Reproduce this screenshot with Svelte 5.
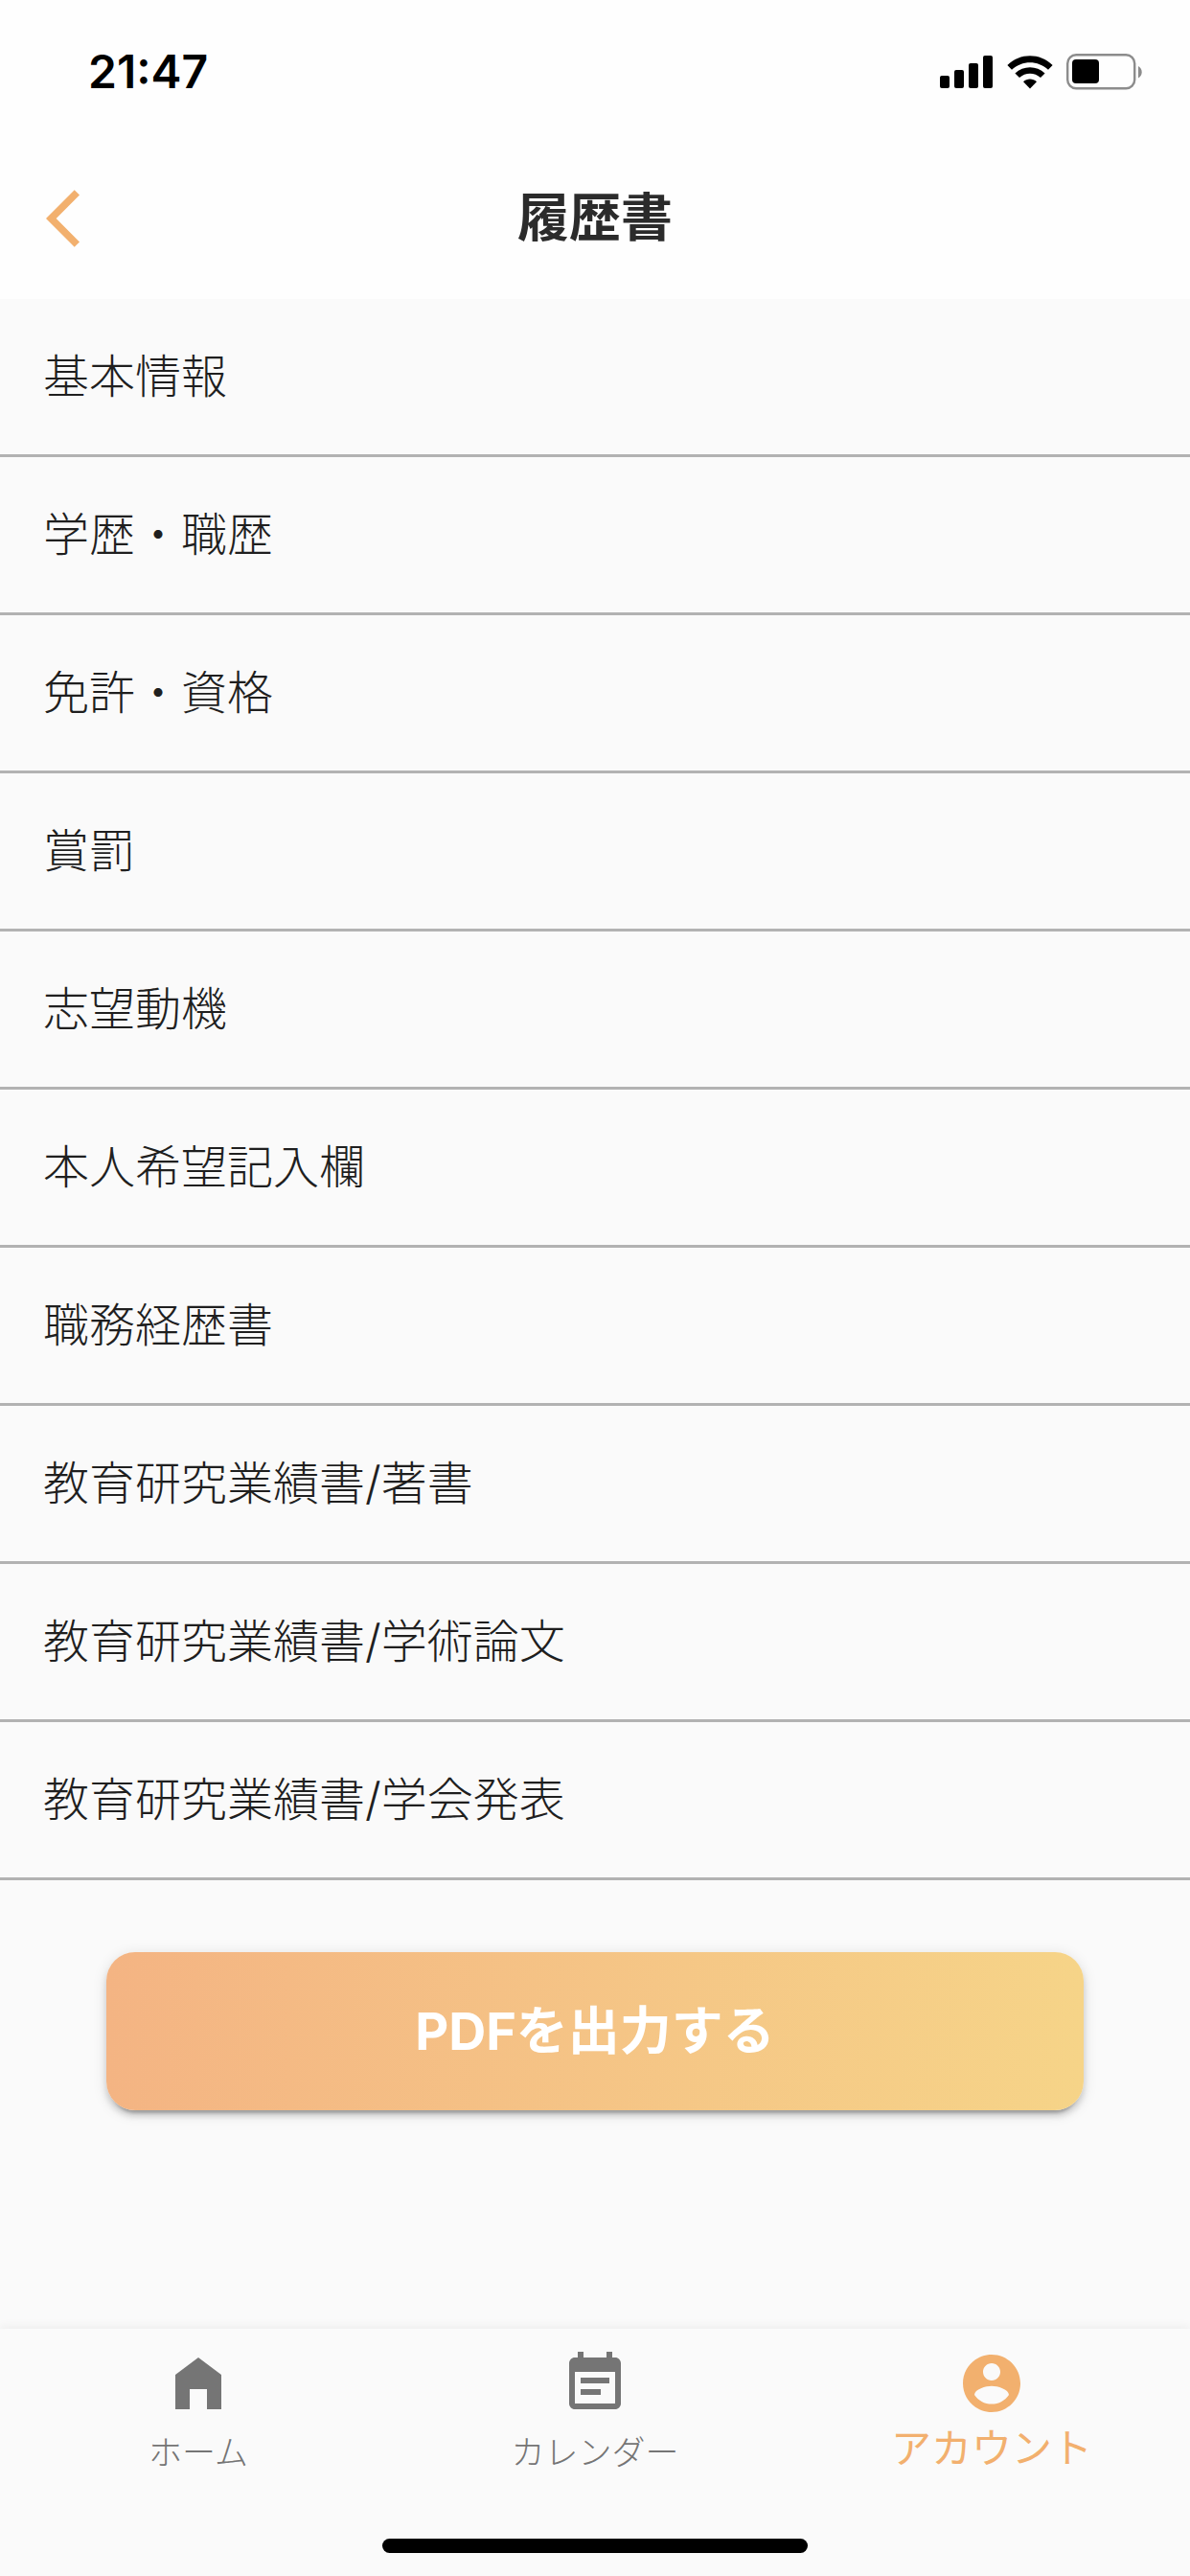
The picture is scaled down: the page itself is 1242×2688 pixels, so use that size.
<script lang="ts">
	let sections = [
		'基本情報',
		'学歴・職歴',
		'免許・資格',
		'賞罰',
		'志望動機',
		'本人希望記入欄',
		'職務経歴書',
		'教育研究業績書/著書',
		'教育研究業績書/学術論文',
		'教育研究業績書/学会発表'
	];

	let tabs = [
		{ label: 'ホーム', icon: 'M12 3L4 9v12h5v-7h6v7h5V9l-8-6z' },
		{
			label: 'カレンダー',
			icon: 'M17 10H7v2h10v-2zm2-7h-1V1h-2v2H8V1H6v2H5c-1.11 0-1.99.9-1.99 2L3 19c0 1.1.89 2 2 2h14c1.1 0 2-.9 2-2V5c0-1.1-.9-2-2-2zm0 16H5V8h14v11zm-5-5H7v2h7v-2z'
		},
		{
			label: 'アカウント',
			icon: 'M12 2C6.48 2 2 6.48 2 12s4.48 10 10 10 10-4.48 10-10S17.52 2 12 2zm0 3c1.66 0 3 1.34 3 3s-1.34 3-3 3-3-1.34-3-3 1.34-3 3-3zm0 14.2c-2.5 0-4.71-1.28-6-3.22.03-1.99 4-3.08 6-3.08 1.99 0 5.97 1.09 6 3.08-1.29 1.94-3.5 3.22-6 3.22z'
		}
	];

	let activeTab = $state(2);
</script>

<div class="screen">
	<header>
		<div class="status">
			<span class="time">21:47</span>
			<div class="indicators">
				<svg width="56" height="36" viewBox="0 0 56 36">
					<rect x="0" y="22" width="10" height="13" rx="2" />
					<rect x="15" y="16" width="10" height="19" rx="2" />
					<rect x="30" y="9" width="10" height="26" rx="2" />
					<rect x="45" y="1" width="10" height="34" rx="2" />
				</svg>
				<svg width="48" height="36" viewBox="0 0 48 36">
					<path d="M24 35.5l-7-7.2c4-3.6 10-3.6 14 0z" />
					<path d="M8.4 19.4l4.6 4.7c6.2-5.8 15.8-5.8 22 0l4.6-4.7c-8.8-8.2-22.4-8.2-31.2 0z" />
					<path d="M.4 11l4.6 4.7c10.7-10.1 27.3-10.1 38 0l4.6-4.7c-13.2-13-34-13-47.2 0z" />
				</svg>
				<svg width="80" height="38" viewBox="0 0 80 38">
					<rect class="shell" x="1.2" y="1.2" width="70" height="35" rx="9" />
					<rect x="6" y="6" width="28" height="25" rx="4" />
					<path class="nub" d="M75 13c5 2.5 5 10 0 12.5z" />
				</svg>
			</div>
		</div>
		<div class="appbar">
			<button class="back" aria-label="戻る">
				<svg width="72" height="72" viewBox="0 0 24 24">
					<path d="M11.67 3.87L9.9 2.1 0 12l9.9 9.9 1.77-1.77L3.54 12z" />
				</svg>
			</button>
			<h1>履歴書</h1>
		</div>
	</header>

	<main>
		<ul>
			{#each sections as section}
				<li><a href="#top">{section}</a></li>
			{/each}
		</ul>
		<div class="action">
			<button class="export">PDFを出力する</button>
		</div>
	</main>

	<footer>
		<nav>
			{#each tabs as tab, i}
				<button class="tab" class:active={i === activeTab} onclick={() => (activeTab = i)}>
					<svg width="72" height="72" viewBox="0 0 24 24"><path d={tab.icon} /></svg>
					<span>{tab.label}</span>
				</button>
			{/each}
		</nav>
		<div class="home-bar"></div>
	</footer>
</div>

<style>
	:global(body) {
		margin: 0;
		background-color: #fafafa;
	}

	.screen {
		min-height: 100vh;
		display: flex;
		flex-direction: column;
		background-color: #fafafa;
		font-family: Inter, 'Noto Sans CJK JP', sans-serif;
	}

	button {
		border: none;
		padding: 0;
		background: none;
		font-family: inherit;
		cursor: pointer;
	}

	svg {
		display: block;
	}

	header {
		background-color: #fefefe;
	}

	.status {
		display: flex;
		justify-content: space-between;
		align-items: center;
		height: 144px;
		padding: 5px 49px 0 92px;
		box-sizing: border-box;
	}

	.time {
		font-size: 48px;
		font-weight: 600;
		line-height: 48px;
		color: #000;
	}

	.indicators {
		display: flex;
		align-items: center;
		gap: 14px;
	}

	.shell {
		fill: none;
		stroke: #8c8c8c;
		stroke-width: 2.4;
	}

	.nub {
		fill: #8c8c8c;
	}

	.appbar {
		display: grid;
		grid-template-columns: 72px 1fr 72px;
		align-items: center;
		height: 168px;
		padding: 0 48px;
	}

	.back {
		fill: #f2b06e;
	}

	h1 {
		margin: 0;
		text-align: center;
		font-size: 54px;
		font-weight: 700;
		line-height: 72px;
		color: #2b2b2b;
	}

	main {
		flex: 1;
	}

	ul {
		margin: 0;
		padding: 0;
		list-style: none;
	}

	li {
		border-bottom: 3px solid #b2b2b2;
	}

	li a {
		display: block;
		padding: 45px;
		font-size: 48px;
		font-weight: 300;
		line-height: 72px;
		color: #1f1f1f;
		text-decoration: none;
	}

	.action {
		padding: 75px 111px;
	}

	.export {
		display: block;
		width: 100%;
		height: 165px;
		border-radius: 30px;
		background: linear-gradient(to right, #f4b483, #f6d488);
		box-shadow:
			0 9px 3px -6px rgba(0, 0, 0, 0.2),
			0 6px 6px rgba(0, 0, 0, 0.14),
			0 3px 15px rgba(0, 0, 0, 0.12);
		color: #fff;
		font-size: 54px;
		font-weight: 700;
		line-height: 72px;
	}

	footer {
		box-shadow: 0 -3px 9px rgba(0, 0, 0, 0.05);
		background-color: #fafafa;
		padding-bottom: 24px;
	}

	nav {
		display: grid;
		grid-template-columns: repeat(3, 1fr);
		height: 219px;
	}

	.tab {
		display: flex;
		flex-direction: column;
		align-items: center;
		padding-top: 21px;
		color: #757575;
		fill: #757575;
		font-size: 35px;
		font-weight: 300;
		line-height: 72px;
	}

	.tab.active {
		color: #f2b06e;
		fill: #f2b06e;
		font-size: 42px;
		font-weight: 400;
		line-height: 64px;
	}

	.home-bar {
		width: 444px;
		height: 15px;
		margin: 0 auto;
		border-radius: 8px;
		background-color: #000;
	}
</style>
